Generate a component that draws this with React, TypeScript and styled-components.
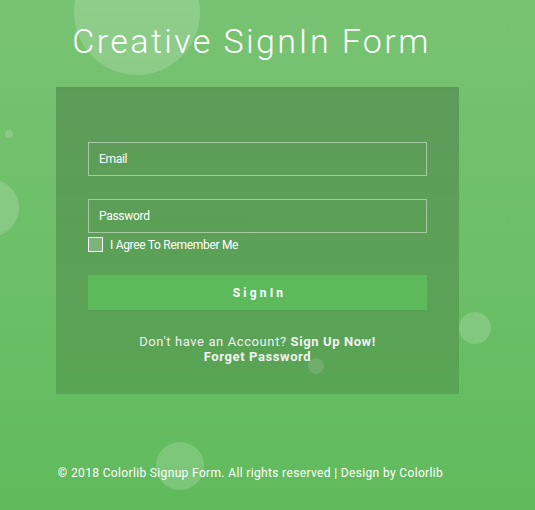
import React from "react";
import styled, { createGlobalStyle } from "styled-components";

const Global = createGlobalStyle`
  html, body { margin: 0; padding: 0; }
  body { font-family: Roboto, "Noto Sans", Arial, sans-serif; }
  * { box-sizing: border-box; }
`;

const Page = styled.div`
  position: relative;
  width: 535px;
  height: 510px;
  overflow: hidden;
  background: linear-gradient(180deg, #78c373 0%, #6dbf68 50%, #60bb5c 100%);
  padding-left: 56px;
`;

const Bubble = styled.span<{ $x: number; $y: number; $r: number }>`
  position: absolute;
  left: ${(p) => p.$x - p.$r}px;
  top: ${(p) => p.$y - p.$r}px;
  width: ${(p) => p.$r * 2}px;
  height: ${(p) => p.$r * 2}px;
  border-radius: 50%;
  background: rgba(255, 255, 255, 0.17);
`;

const Column = styled.div`
  position: relative;
  width: 403px;
  display: flex;
  flex-direction: column;
`;

const Title = styled.h1`
  margin: 21px 0 0;
  padding-right: 12px;
  text-align: center;
  font-family: Roboto, sans-serif;
  font-weight: 300;
  font-size: 34px;
  line-height: 40px;
  letter-spacing: 2.4px;
  color: #ffffff;
`;

const Panel = styled.div`
  margin-top: 26px;
  height: 307px;
  background: linear-gradient(180deg, rgba(0, 0, 0, 0.2), rgba(0, 0, 0, 0.13));
  padding: 55px 32px 0;
  display: flex;
  flex-direction: column;
`;

const Input = styled.div<{ $mt?: number }>`
  height: 34px;
  margin-top: ${(p) => p.$mt ?? 0}px;
  border: 1px solid rgba(255, 255, 255, 0.45);
  display: flex;
  align-items: center;
  padding-left: 10px;
  font-family: Roboto, sans-serif;
  font-size: 12px;
  letter-spacing: -0.3px;
  color: #ffffff;
`;

const CheckRow = styled.label`
  margin-top: 4px;
  display: flex;
  align-items: center;
  gap: 7px;
  font-family: Roboto, sans-serif;
  font-size: 12px;
  letter-spacing: -0.3px;
  color: #ffffff;
`;

const Box = styled.span`
  width: 15px;
  height: 15px;
  border: 1px solid #ffffff;
  background: rgba(255, 255, 255, 0.2);
`;

const Button = styled.button`
  margin-top: 23px;
  height: 35px;
  border: none;
  background: #5cba5b;
  color: #ffffff;
  font-family: Roboto, sans-serif;
  font-weight: 700;
  font-size: 12px;
  letter-spacing: 3.2px;
  padding: 0;
  padding-left: 4px;
`;

const Links = styled.div`
  margin-top: 24px;
  text-align: center;
  font-family: Roboto, sans-serif;
  font-size: 13px;
  line-height: 15px;
  color: #f1f1f1;
  letter-spacing: 0.6px;
`;

const Strong = styled.span`
  font-weight: 700;
`;

const Footer = styled.p`
  margin: 72px 0 0;
  padding-right: 14px;
  text-align: center;
  font-family: Roboto, sans-serif;
  font-size: 12px;
  letter-spacing: 0.35px;
  color: #ffffff;
  white-space: nowrap;
`;

export default function App() {
  return (
    <>
      <Global />
      <Page>
        <Bubble $x={137} $y={12} $r={63} />
        <Bubble $x={9} $y={134} $r={4} />
        <Bubble $x={-10} $y={208} $r={29} />
        <Bubble $x={475} $y={328} $r={16} />
        <Bubble $x={316} $y={366} $r={8} />
        <Bubble $x={180} $y={466} $r={24} />
        <Column>
          <Title>Creative SignIn Form</Title>
          <Panel>
            <Input>Email</Input>
            <Input $mt={23}>Password</Input>
            <CheckRow>
              <Box />
              I Agree To Remember Me
            </CheckRow>
            <Button>SignIn</Button>
            <Links>
              Don't have an Account? <Strong>Sign Up Now!</Strong>
              <br />
              <Strong>Forget Password</Strong>
            </Links>
          </Panel>
          <Footer>© 2018 Colorlib Signup Form. All rights reserved | Design by Colorlib</Footer>
        </Column>
      </Page>
    </>
  );
}
